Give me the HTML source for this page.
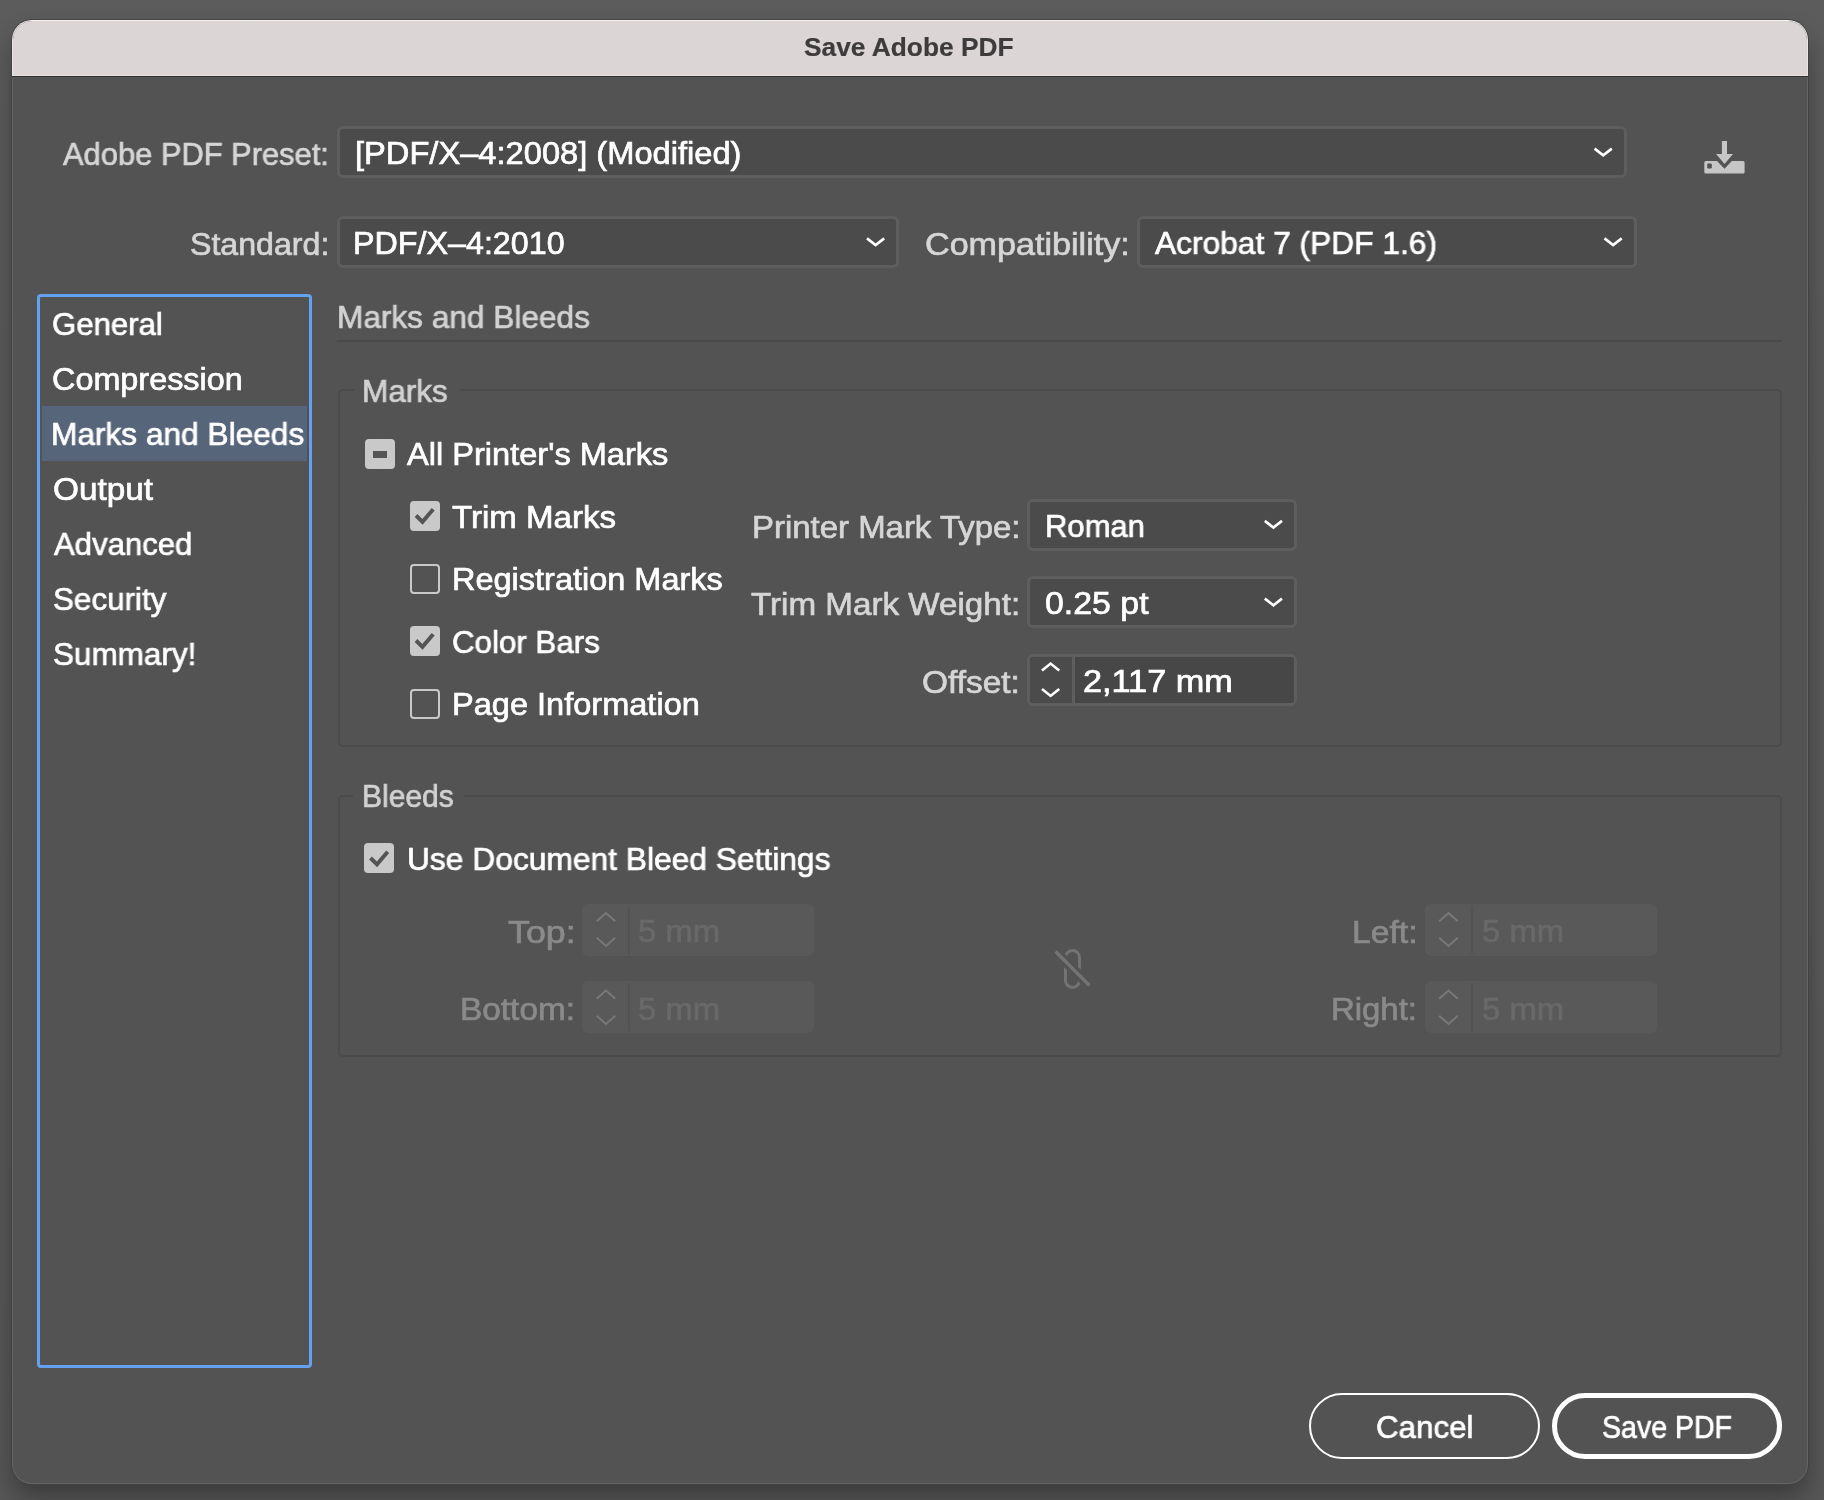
<!DOCTYPE html>
<html><head><meta charset="utf-8">
<style>
html,body{margin:0;padding:0;}
body{width:1824px;height:1500px;overflow:hidden;position:relative;background:#5b5b5b;font-family:"Liberation Sans",sans-serif;}
.a{position:absolute;box-sizing:border-box;}
.t{position:absolute;white-space:pre;transform-origin:0 0;font-family:"Liberation Sans",sans-serif;-webkit-text-stroke:0.7px currentColor;will-change:transform;}
.tb{-webkit-text-stroke:0.2px currentColor;}
.dd{position:absolute;box-sizing:border-box;background:#4b4b4b;border:3px solid #5e5e5e;border-radius:6px;}
.df{position:absolute;box-sizing:border-box;background:#595959;border-radius:6px;}
.cb{position:absolute;box-sizing:border-box;border-radius:4px;width:29.5px;height:30px;}
</style></head><body>
<!-- background shading -->
<div class="a" style="left:0;top:0;width:1824px;height:1500px;background:linear-gradient(to bottom,#5c5c5c 0,#5a5a5a 600px,#575757 1500px);"></div>
<!-- dialog shadow -->
<div class="a" style="left:12px;top:22px;width:1796px;height:1462px;border-radius:20px;box-shadow:0 14px 26px rgba(0,0,0,0.32);"></div>
<!-- dialog rings -->
<div class="a" style="left:11px;top:19px;width:1798px;height:1466px;border-radius:21px;background:#424242;"></div>
<div class="a" style="left:12px;top:20px;width:1796px;height:1464px;border-radius:20px;background:linear-gradient(to bottom,#f6f3f3 0,#ebe6e6 3px,#e9e4e4 56px,#656565 56px,#646464 100%);"></div>
<div class="a" style="left:13px;top:21px;width:1794px;height:1462px;border-radius:19px;background:#535353;"></div>
<!-- title bar -->
<div class="a" style="left:13px;top:21px;width:1794px;height:54px;border-radius:19px 19px 0 0;background:#dbd5d5;"></div>
<div class="a" style="left:12px;top:75px;width:1796px;height:1px;background:#e7e2e2;"></div>
<div class="a" style="left:12px;top:76px;width:1796px;height:1px;background:#2e2e2e;"></div>

<!-- dropdowns -->
<div class="dd" style="left:337px;top:126px;width:1290px;height:52px;"></div>
<div class="dd" style="left:337px;top:216px;width:562px;height:52px;"></div>
<div class="dd" style="left:1137px;top:216px;width:500px;height:52px;"></div>
<div class="dd" style="left:1027px;top:499px;width:270px;height:52px;"></div>
<div class="dd" style="left:1027px;top:576px;width:270px;height:52px;"></div>
<div class="dd" style="left:1027px;top:654px;width:270px;height:52px;background:#474747;"></div>
<div class="a" style="left:1030px;top:657px;width:42px;height:46px;background:#4b4b4b;border-radius:3px 0 0 3px;"></div>
<div class="a" style="left:1072px;top:657px;width:3px;height:46px;background:#5e5e5e;"></div>

<!-- nav -->
<div class="a" style="left:37px;top:294px;width:275px;height:1074px;border:3px solid #65a1f1;border-radius:4px;"></div>
<div class="a" style="left:42px;top:406px;width:265px;height:55px;background:#566579;"></div>

<!-- separator -->
<div class="a" style="left:337px;top:340px;width:1445px;height:2px;background:#4a4a4a;"></div>

<!-- group boxes -->
<div class="a" style="left:338px;top:389px;width:1444px;height:358px;border:2px solid #4b4b4b;border-radius:5px;"></div>
<div class="a" style="left:354px;top:385px;width:106px;height:10px;background:#535353;"></div>
<div class="a" style="left:338px;top:795px;width:1444px;height:262px;border:2px solid #4b4b4b;border-radius:5px;"></div>
<div class="a" style="left:353px;top:791px;width:111px;height:10px;background:#535353;"></div>

<!-- disabled fields -->
<div class="df" style="left:582px;top:904px;width:232px;height:52px;"></div>
<div class="df" style="left:582px;top:981px;width:232px;height:52px;"></div>
<div class="df" style="left:1425px;top:904px;width:232px;height:52px;"></div>
<div class="df" style="left:1425px;top:981px;width:232px;height:52px;"></div>
<div class="a" style="left:628px;top:906px;width:1.5px;height:48px;background:#535353;"></div>
<div class="a" style="left:628px;top:983px;width:1.5px;height:48px;background:#535353;"></div>
<div class="a" style="left:1471px;top:906px;width:1.5px;height:48px;background:#535353;"></div>
<div class="a" style="left:1471px;top:983px;width:1.5px;height:48px;background:#535353;"></div>

<!-- checkboxes -->
<div class="cb" style="left:365px;top:439px;background:#c9c9c9;"></div>
<div class="a" style="left:372.5px;top:451px;width:14px;height:7px;background:#555;"></div>
<div class="cb" style="left:410px;top:501px;background:#c9c9c9;"></div>
<div class="cb" style="left:410px;top:564px;border:2px solid #c9c9c9;"></div>
<div class="cb" style="left:410px;top:626px;background:#c9c9c9;"></div>
<div class="cb" style="left:410px;top:689px;border:2px solid #c9c9c9;"></div>
<div class="cb" style="left:364px;top:843px;background:#c9c9c9;"></div>

<!-- buttons -->
<div class="a" style="left:1309px;top:1393px;width:231px;height:66px;border:2.5px solid #fff;border-radius:33px;"></div>
<div class="a" style="left:1552px;top:1393px;width:230px;height:66px;border:5px solid #fff;border-radius:33px;"></div>

<svg class="a" style="left:0;top:0" width="1824" height="1500" viewBox="0 0 1824 1500">
<g fill="#c6c6c6">
 <rect x="1721.9" y="141" width="5.1" height="14"/>
 <polygon points="1716.1,153.9 1733,153.9 1724.5,163.9"/>
 <path d="M1705.8,161 L1717,161 L1724.5,168.8 L1731.8,161 L1743.1,161 Q1744.6,161 1744.6,162.5 L1744.6,172.1 Q1744.6,173.6 1743.1,173.6 L1705.8,173.6 Q1704.3,173.6 1704.3,172.1 L1704.3,162.5 Q1704.3,161 1705.8,161 Z"/>
 <rect x="1707.2" y="163.4" width="4.6" height="5" rx="1" fill="#535353"/>
</g>
<g fill="none" stroke="#fff" stroke-width="2.6" stroke-linecap="butt" stroke-linejoin="miter">
 <polyline points="1594.6,148.6 1603.2,155.3 1611.8,148.6"/>
 <polyline points="867,238.4 875.6,245.1 884.2,238.4"/>
 <polyline points="1604.5,238.4 1613.1,245.1 1621.7,238.4"/>
 <polyline points="1264.8,520.9 1273.4,527.6 1282,520.9"/>
 <polyline points="1264.8,598.6 1273.4,605.3 1282,598.6"/>
 <polyline points="1042,670.5 1050.6,663.6 1059.2,670.5"/>
 <polyline points="1042,689 1050.6,695.9 1059.2,689"/>
</g>
<g fill="none" stroke="#787878" stroke-width="2" stroke-linecap="square">
 <polyline points="597.5,920.5 606,913 614.5,920.5"/>
 <polyline points="597.5,938.5 606,946 614.5,938.5"/>
 <polyline points="597.5,998 606,990.5 614.5,998"/>
 <polyline points="597.5,1016.5 606,1024 614.5,1016.5"/>
 <polyline points="1440,920.5 1448.5,913 1457,920.5"/>
 <polyline points="1440,938.5 1448.5,946 1457,938.5"/>
 <polyline points="1440,998 1448.5,990.5 1457,998"/>
 <polyline points="1440,1016.5 1448.5,1024 1457,1016.5"/>
</g>
<g fill="none" stroke="#545454" stroke-width="3.9" stroke-linecap="butt" stroke-linejoin="miter">
 <polyline points="416.0,515.5 422.5,521.8 433.2,509.3"/>
 <polyline points="416.0,640.5 422.5,646.8 433.2,634.3"/>
 <polyline points="370.5,858.0 377.0,864.3 387.7,851.8"/>
</g>
<defs><mask id="lm" maskUnits="userSpaceOnUse" x="1040" y="930" width="70" height="70"><rect x="1040" y="930" width="70" height="70" fill="#fff"/><line x1="1050" y1="946" x2="1095" y2="991" stroke="#000" stroke-width="10"/></mask></defs>
<g fill="none" stroke="#737373" stroke-width="3">
 <rect x="1065.5" y="950.4" width="14" height="37" rx="7" ry="7" mask="url(#lm)"/>
 <line x1="1055.5" y1="951.5" x2="1089.5" y2="985.5" stroke-width="3.3"/>
</g>
</svg>
<div class="t" style="left:804.31px;top:27.00px;font-size:26px;line-height:40px;color:#3d3b3c;font-weight:700;transform:scaleX(1.0117);-webkit-text-stroke:0.2px #3d3b3c;">Save Adobe PDF</div>
<div class="t" style="left:63.35px;top:134.00px;font-size:32px;line-height:40px;color:#d6d6d6;transform:scaleX(0.9646);">Adobe PDF Preset:</div>
<div class="t" style="left:355.06px;top:133.00px;font-size:32px;line-height:40px;color:#ffffff;transform:scaleX(1.0202);">[PDF/X–4:2008] (Modified)</div>
<div class="t" style="left:190.06px;top:224.00px;font-size:32px;line-height:40px;color:#d6d6d6;transform:scaleX(1.0043);">Standard:</div>
<div class="t" style="left:353.27px;top:223.00px;font-size:32px;line-height:40px;color:#ffffff;transform:scaleX(1.0083);">PDF/X–4:2010</div>
<div class="t" style="left:924.64px;top:224.00px;font-size:32px;line-height:40px;color:#d6d6d6;transform:scaleX(1.0663);">Compatibility:</div>
<div class="t" style="left:1155.35px;top:223.00px;font-size:32px;line-height:40px;color:#ffffff;transform:scaleX(0.9909);">Acrobat 7 (PDF 1.6)</div>
<div class="t" style="left:52.29px;top:304.00px;font-size:32px;line-height:40px;color:#ffffff;transform:scaleX(0.9728);">General</div>
<div class="t" style="left:52.23px;top:359.00px;font-size:32px;line-height:40px;color:#ffffff;transform:scaleX(1.0116);">Compression</div>
<div class="t" style="left:51.32px;top:414.00px;font-size:32px;line-height:40px;color:#ffffff;transform:scaleX(0.9886);">Marks and Bleeds</div>
<div class="t" style="left:52.52px;top:469.00px;font-size:32px;line-height:40px;color:#ffffff;transform:scaleX(1.0420);">Output</div>
<div class="t" style="left:53.85px;top:524.00px;font-size:32px;line-height:40px;color:#ffffff;transform:scaleX(0.9717);">Advanced</div>
<div class="t" style="left:52.60px;top:579.00px;font-size:32px;line-height:40px;color:#ffffff;transform:scaleX(0.9804);">Security</div>
<div class="t" style="left:52.59px;top:634.00px;font-size:32px;line-height:40px;color:#ffffff;transform:scaleX(0.9826);">Summary!</div>
<div class="t" style="left:336.82px;top:297.00px;font-size:32px;line-height:40px;color:#d2d2d2;transform:scaleX(0.9874);">Marks and Bleeds</div>
<div class="t" style="left:361.83px;top:371.00px;font-size:32px;line-height:40px;color:#d2d2d2;transform:scaleX(0.9854);">Marks</div>
<div class="t" style="left:407.15px;top:434.00px;font-size:32px;line-height:40px;color:#ffffff;transform:scaleX(1.0177);">All Printer's Marks</div>
<div class="t" style="left:451.69px;top:497.00px;font-size:32px;line-height:40px;color:#ffffff;transform:scaleX(1.0330);">Trim Marks</div>
<div class="t" style="left:452.05px;top:559.00px;font-size:32px;line-height:40px;color:#ffffff;transform:scaleX(1.0151);">Registration Marks</div>
<div class="t" style="left:451.89px;top:622.00px;font-size:32px;line-height:40px;color:#ffffff;transform:scaleX(0.9779);">Color Bars</div>
<div class="t" style="left:452.05px;top:684.00px;font-size:32px;line-height:40px;color:#ffffff;transform:scaleX(1.0169);">Page Information</div>
<div class="t" style="left:751.72px;top:507.00px;font-size:32px;line-height:40px;color:#d6d6d6;transform:scaleX(1.0291);">Printer Mark Type:</div>
<div class="t" style="left:1044.67px;top:506.00px;font-size:32px;line-height:40px;color:#ffffff;transform:scaleX(0.9690);">Roman</div>
<div class="t" style="left:750.69px;top:584.00px;font-size:32px;line-height:40px;color:#d6d6d6;transform:scaleX(1.0370);">Trim Mark Weight:</div>
<div class="t" style="left:1045.43px;top:583.00px;font-size:32px;line-height:40px;color:#ffffff;transform:scaleX(1.0582);">0.25 pt</div>
<div class="t" style="left:922.21px;top:662.00px;font-size:32px;line-height:40px;color:#d6d6d6;transform:scaleX(1.0446);">Offset:</div>
<div class="t" style="left:1082.54px;top:661.00px;font-size:32px;line-height:40px;color:#ffffff;transform:scaleX(1.0710);">2,117 mm</div>
<div class="t" style="left:362.05px;top:776.00px;font-size:32px;line-height:40px;color:#d2d2d2;transform:scaleX(0.9386);">Bleeds</div>
<div class="t" style="left:407.13px;top:839.00px;font-size:32px;line-height:40px;color:#ffffff;transform:scaleX(0.9920);">Use Document Bleed Settings</div>
<div class="t" style="left:507.93px;top:912.00px;font-size:32px;line-height:40px;color:#8a8a8a;transform:scaleX(1.1183);">Top:</div>
<div class="t" style="left:460.18px;top:989.00px;font-size:32px;line-height:40px;color:#8a8a8a;transform:scaleX(1.0433);">Bottom:</div>
<div class="t" style="left:1351.66px;top:912.00px;font-size:32px;line-height:40px;color:#8a8a8a;transform:scaleX(1.0516);">Left:</div>
<div class="t" style="left:1331.02px;top:989.00px;font-size:32px;line-height:40px;color:#8a8a8a;transform:scaleX(1.0281);">Right:</div>
<div class="t" style="left:638.04px;top:911.00px;font-size:32px;line-height:40px;color:#696969;transform:scaleX(1.0260);">5 mm</div>
<div class="t" style="left:638.04px;top:989.00px;font-size:32px;line-height:40px;color:#696969;transform:scaleX(1.0260);">5 mm</div>
<div class="t" style="left:1481.74px;top:911.00px;font-size:32px;line-height:40px;color:#696969;transform:scaleX(1.0260);">5 mm</div>
<div class="t" style="left:1481.74px;top:989.00px;font-size:32px;line-height:40px;color:#696969;transform:scaleX(1.0260);">5 mm</div>
<div class="t" style="left:1375.98px;top:1407.00px;font-size:32px;line-height:40px;color:#ffffff;transform:scaleX(0.9781);">Cancel</div>
<div class="t" style="left:1601.71px;top:1407.00px;font-size:32px;line-height:40px;color:#ffffff;transform:scaleX(0.8915);">Save PDF</div>
</body></html>
